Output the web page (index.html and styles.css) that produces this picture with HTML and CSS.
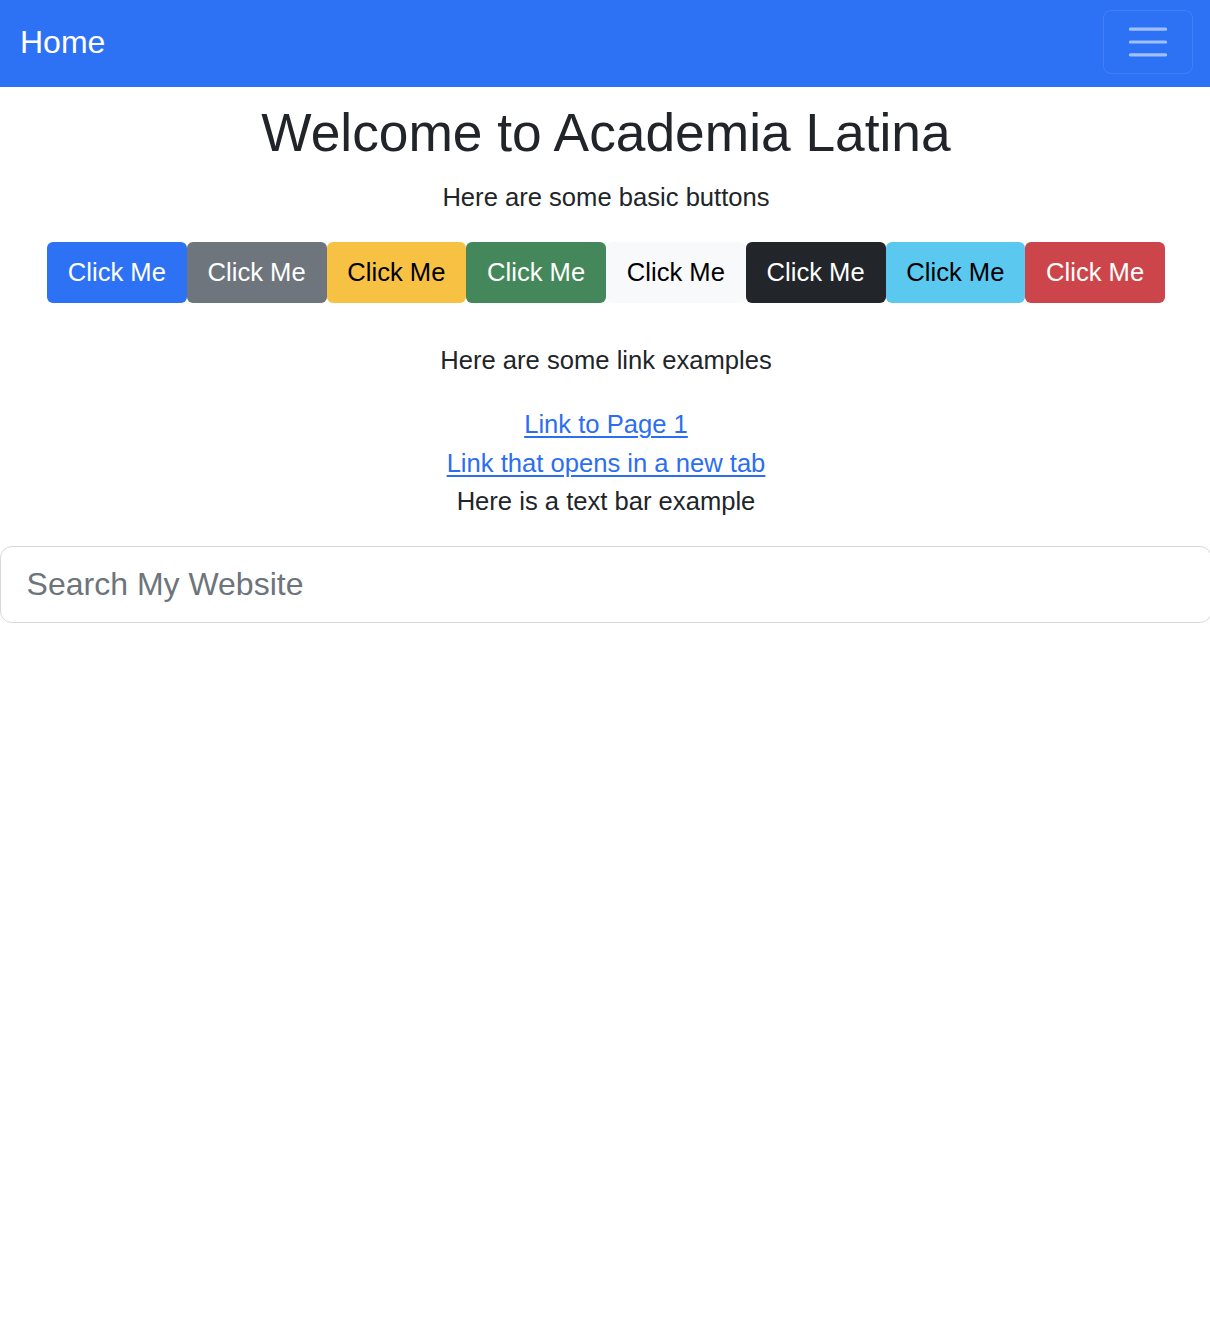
FILE: index.html
```html
<!DOCTYPE html>
<html lang="en">
<head>
<meta charset="utf-8">
<title>Academia Latina</title>
<link rel="stylesheet" href="styles.css">
</head>
<body>
<nav class="navbar">
  <a class="brand" href="#">Home</a>
  <button class="toggler" type="button" aria-label="Toggle navigation">
    <svg class="toggler-icon" viewBox="0 0 30 30" width="48" height="48"><path d="M4 7h22M4 15h22M4 23h22" stroke="rgba(255,255,255,0.55)" stroke-width="2" stroke-linecap="round" stroke-miterlimit="10" fill="none"/></svg>
  </button>
</nav>
<main class="content">
  <h1 class="title">Welcome to Academia Latina</h1>
  <p class="lead-text">Here are some basic buttons</p>
  <div class="btn-row">
    <button class="btn btn-primary">Click Me</button>
    <button class="btn btn-secondary">Click Me</button>
    <button class="btn btn-warning">Click Me</button>
    <button class="btn btn-success">Click Me</button>
    <button class="btn btn-light">Click Me</button>
    <button class="btn btn-dark">Click Me</button>
    <button class="btn btn-info">Click Me</button>
    <button class="btn btn-danger">Click Me</button>
  </div>
  <p class="section-text">Here are some link examples</p>
  <div class="links">
    <a href="#">Link to Page 1</a>
    <a href="#" target="_blank">Link that opens in a new tab</a>
    <span>Here is a text bar example</span>
  </div>
  <input class="search" type="text" placeholder="Search My Website">
</main>
</body>
</html>
```
FILE: styles.css
```css
html, body {
  margin: 0;
  padding: 0;
}
body {
  font-family: "Liberation Sans", Arial, Helvetica, sans-serif;
  font-size: 25.6px;
  line-height: 38.4px;
  color: #212529;
  background: #fff;
  overflow-x: hidden;
}
.navbar {
  background: #2d71f5;
  height: 87px;
  box-sizing: border-box;
  padding: 10px 17px 13px 20px;
  display: flex;
  align-items: center;
  justify-content: space-between;
}
.brand {
  color: #fff;
  text-decoration: none;
  font-size: 32px;
  line-height: 48px;
}
.toggler {
  width: 90px;
  height: 64px;
  box-sizing: border-box;
  background: transparent;
  border: 1.6px solid rgba(255,255,255,0.1);
  border-radius: 8px;
  padding: 0;
  display: flex;
  align-items: center;
  justify-content: center;
  align-self: flex-start;
}
.toggler-icon {
  display: block;
}
.content {
  text-align: center;
  padding-top: 14px;
  width: 1212px;
}
.title {
  font-size: 53.3px;
  line-height: 64px;
  font-weight: 500;
  margin: 0 0 12.8px;
}
.lead-text {
  margin: 0 0 25.6px;
}
.btn-row {
  display: flex;
  justify-content: center;
}
.btn {
  font-family: inherit;
  font-size: 25.6px;
  line-height: 38.4px;
  padding: 9.6px 19.2px;
  border: 1.6px solid transparent;
  border-radius: 6px;
  color: #fff;
  cursor: pointer;
  width: 139.75px;
  height: 61px;
  box-sizing: border-box;
  white-space: nowrap;
}
.btn-primary { background: #2d71f5; }
.btn-secondary { background: #6e757c; }
.btn-warning { background: #f7c244; color: #000; }
.btn-success { background: #43875a; }
.btn-light { background: #f8f9fa; color: #000; }
.btn-dark { background: #222529; }
.btn-info { background: #5bc8ef; color: #000; }
.btn-danger { background: #cc454b; }
.section-text {
  margin: 38.4px 0 25.6px;
}
.links {
  display: flex;
  flex-direction: column;
  align-items: center;
}
.links a {
  color: #2c6ef2;
  text-decoration: underline;
  text-decoration-thickness: 1.6px;
  text-underline-offset: 3px;
}
.search {
  display: block;
  box-sizing: border-box;
  width: 100%;
  height: 77px;
  margin: 25.6px 0 0;
  padding: 12.8px 25.6px;
  font-family: inherit;
  font-size: 32px;
  line-height: 48px;
  color: #212529;
  border: 1.6px solid #d5d9de;
  border-radius: 12px;
  background: #fff;
  outline: none;
}
.search::placeholder {
  color: #6d747b;
}
```
